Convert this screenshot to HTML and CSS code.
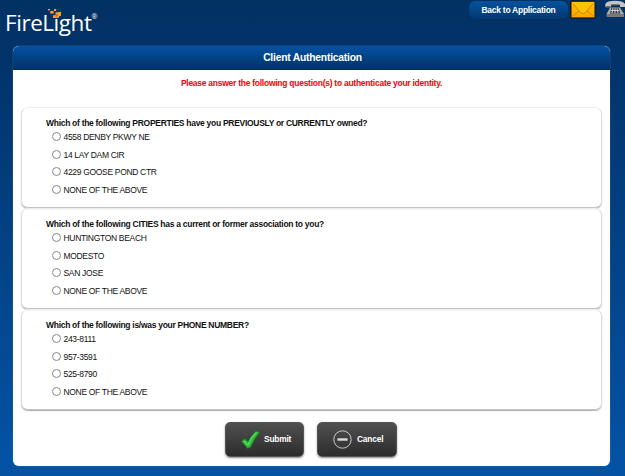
FILE: index.html
```html
<!DOCTYPE html>
<html lang="en">
<head>
<meta charset="utf-8">
<title>Client Authentication</title>
<link rel="stylesheet" href="styles.css">
</head>
<body>
<header class="topbar">
  <div class="logo"><span class="wordmark">FireLight</span><span class="reg">®</span>
    <svg class="sparks" width="16" height="12" viewBox="0 0 16 12"><g fill="#f6a52c"><rect x="1" y="1" width="2" height="1.4"/><rect x="3.2" y="3" width="3.6" height="2.6" rx=".6"/><rect x="7" y="1" width="2.2" height="2"/><path d="M8.500 4.500l5.500-.7v4l-2 .6v1.400l-6 .3V7.200h2.500z"/></g><rect x="8.400" y="6.200" width="2.600" height="2.300" fill="#f15a24"/></svg>
  </div>
  <nav class="actions">
    <a class="back">Back to Application</a>
    <svg class="mail" width="26" height="19" viewBox="0 0 26 19"><defs><linearGradient id="gold" x2="0" y2="1"><stop stop-color="#ffbe00"/><stop offset="1" stop-color="#ffa500"/></linearGradient></defs><rect x=".5" y=".5" width="25" height="18" rx="1.5" fill="#111"/><rect x="1.5" y="1.800" width="23" height="15.600" fill="url(#gold)"/><path d="M2 2.500h22L15.500 12.500q-2.500 2.500-5 0z" fill="#ffc400"/><path d="M3 3.500l7.500 9q2.500 2.500 5 0l7.500-9M3 16l6-5M23 16l-6-5" fill="none" stroke="#c08500" stroke-width=".9"/></svg>
    <svg class="phone" width="20" height="18" viewBox="0 0 20 18"><path d="M5 7.500h10l3.700 6v3.200H1.800v-3.200z" fill="#aaa"/><path d="M1.800 14h17v2.700h-17z" fill="#777"/><path d="M.3 6V4Q2 .8 10 .8T20 4v3h-5V4.700H6V6.200q0 1-1 1H1.300q-1 0-1-1.200z" fill="#c4c4c4"/><path d="M1 6.800h4.400M6.200 5h8" stroke="#555"/><path d="M6.500 8h7l1.800 5.500H5z" fill="#303b47"/><path d="M8 8l-1 5M10 8v5M12 8l1 5M6 10.500h8" stroke="#ddd" stroke-width=".9"/></svg>
  </nav>
</header>
<main class="panel">
  <h1 class="title">Client Authentication</h1>
  <p class="notice">Please answer the following question(s) to authenticate your identity.</p>
  <form class="questions">
    <fieldset class="card">
      <div class="question">Which of the following PROPERTIES have you PREVIOUSLY or CURRENTLY owned?</div>
      <label class="option"><input type="radio" name="p">4558 DENBY PKWY NE</label>
      <label class="option"><input type="radio" name="p">14 LAY DAM CIR</label>
      <label class="option"><input type="radio" name="p">4229 GOOSE POND CTR</label>
      <label class="option"><input type="radio" name="p">NONE OF THE ABOVE</label>
    </fieldset>
    <fieldset class="card">
      <div class="question cities">Which of the following CITIES has a current or former association to you?</div>
      <label class="option"><input type="radio" name="c">HUNTINGTON BEACH</label>
      <label class="option"><input type="radio" name="c">MODESTO</label>
      <label class="option"><input type="radio" name="c">SAN JOSE</label>
      <label class="option"><input type="radio" name="c">NONE OF THE ABOVE</label>
    </fieldset>
    <fieldset class="card">
      <div class="question">Which of the following is/was your PHONE NUMBER?</div>
      <label class="option"><input type="radio" name="n">243-8111</label>
      <label class="option"><input type="radio" name="n">957-3591</label>
      <label class="option"><input type="radio" name="n">525-8790</label>
      <label class="option"><input type="radio" name="n">NONE OF THE ABOVE</label>
    </fieldset>
    <div class="buttons">
      <button class="btn submit" type="button"><svg width="19" height="19" viewBox="0 0 19 19"><path d="M.5 11.200l3.500-2.500 3 3Q10.500 5 15 1l3.500 1.500Q13 8.500 9.500 17.200L6.500 18.300z" fill="#32bd3b" stroke="#168522" stroke-width=".8"/><path d="M3 11l3.700 4Q10 7 15.600 2.500" fill="none" stroke="#7be07b" stroke-width="1"/></svg><span>Submit</span></button>
      <button class="btn cancel" type="button"><svg width="19" height="19" viewBox="0 0 19 19"><circle cx="9.500" cy="9.500" r="8.700" fill="none" stroke="#ccc" stroke-width="1"/><path d="M4.500 9.500h10" stroke="#ddd" stroke-width="2.400"/></svg><span>Cancel</span></button>
    </div>
  </form>
</main>
</body>
</html>
```
FILE: styles.css
```css
* { box-sizing: border-box; }
body {
  margin: 0;
  height: 476px;
  overflow: hidden;
  font-family: "Liberation Sans", Arial, sans-serif;
  font-size: 8.5px;
  letter-spacing: -.32px;
  color: #111;
  background: linear-gradient(#023163, #02346c 15%, #0352a3 95%);
}
.topbar { display: flex; justify-content: space-between; height: 46px; }
.logo { position: relative; display: flex; padding: 9px 0 0 5px; color: #fff; }
.wordmark { font: 22.5px/28px "Open Sans", sans-serif; letter-spacing: -.45px; }
.reg { font: 7px/8px "Open Sans", sans-serif; padding-top: 4px; }
.sparks { position: absolute; left: 47px; top: 8px; }
.actions { display: flex; align-items: flex-start; width: 156px; flex: none; }
.back {
  width: 99px;
  height: 18px;
  margin: 1px 2px 0 0;
  border-radius: 6px;
  background: linear-gradient(#0352a0, #03386f);
  box-shadow: 0 0 1px #001f45;
  color: #fff;
  font-weight: bold;
  letter-spacing: -.26px;
  line-height: 18px;
  text-align: center;
  white-space: nowrap;
}
.mail { flex: none; margin-right: 9px; }
.phone { flex: none; }
.panel {
  width: 597px;
  height: 420px;
  margin-left: 13px;
  border-radius: 6px;
  overflow: hidden;
  background: #fff;
  box-shadow: 0 0 1px #9fb9d5;
}
.title {
  margin: 0;
  height: 24px;
  padding-left: 2px;
  background: linear-gradient(#0352a3, #023163);
  color: #fff;
  font-size: 10.3px;
  letter-spacing: -.21px;
  line-height: 24px;
  text-align: center;
}
.notice {
  margin: 0;
  height: 37px;
  color: #f00;
  font-weight: bold;
  letter-spacing: -.26px;
  line-height: 27px;
  text-align: center;
}
.questions { padding: 0 8px; }
.card {
  height: 101px;
  min-width: 0;
  margin: 0;
  padding: 10px 0 0 24px;
  border: 1px solid #ddd;
  border-top-color: #eee;
  border-bottom: 1px solid #c4c4c4;
  border-radius: 7px;
  box-shadow: 0 1px 1px #aaa;
}
.question { height: 10px; font-weight: bold; letter-spacing: -.29px; line-height: 10px; white-space: nowrap; }
.option { display: flex; align-items: center; height: 17.7px; padding-left: 5px; }
.option input {
  appearance: none;
  width: 9px;
  height: 9px;
  margin: 0 3px 1px .5px;
  border: 1px solid #888;
  border-radius: 50%;
  background: #fff;
}
.cities { letter-spacing: -.28px; }
.buttons { display: flex; gap: 13px; padding: 12px 0 0 204px; }
.btn {
  display: flex;
  align-items: center;
  width: 79px;
  height: 35px;
  padding: 0 0 0 15px;
  border: 1px solid #555;
  border-radius: 5px;
  background: linear-gradient(#505050, #2c2c2c);
  box-shadow: 0 1px 2px #888;
  color: #fff;
  font: bold 8.4px "Liberation Sans", Arial, sans-serif;
  letter-spacing: -.2px;
  gap: 4px;
}
.btn span { padding-bottom: 2px; }
.cancel { width: 80px; gap: 5px; }
```
